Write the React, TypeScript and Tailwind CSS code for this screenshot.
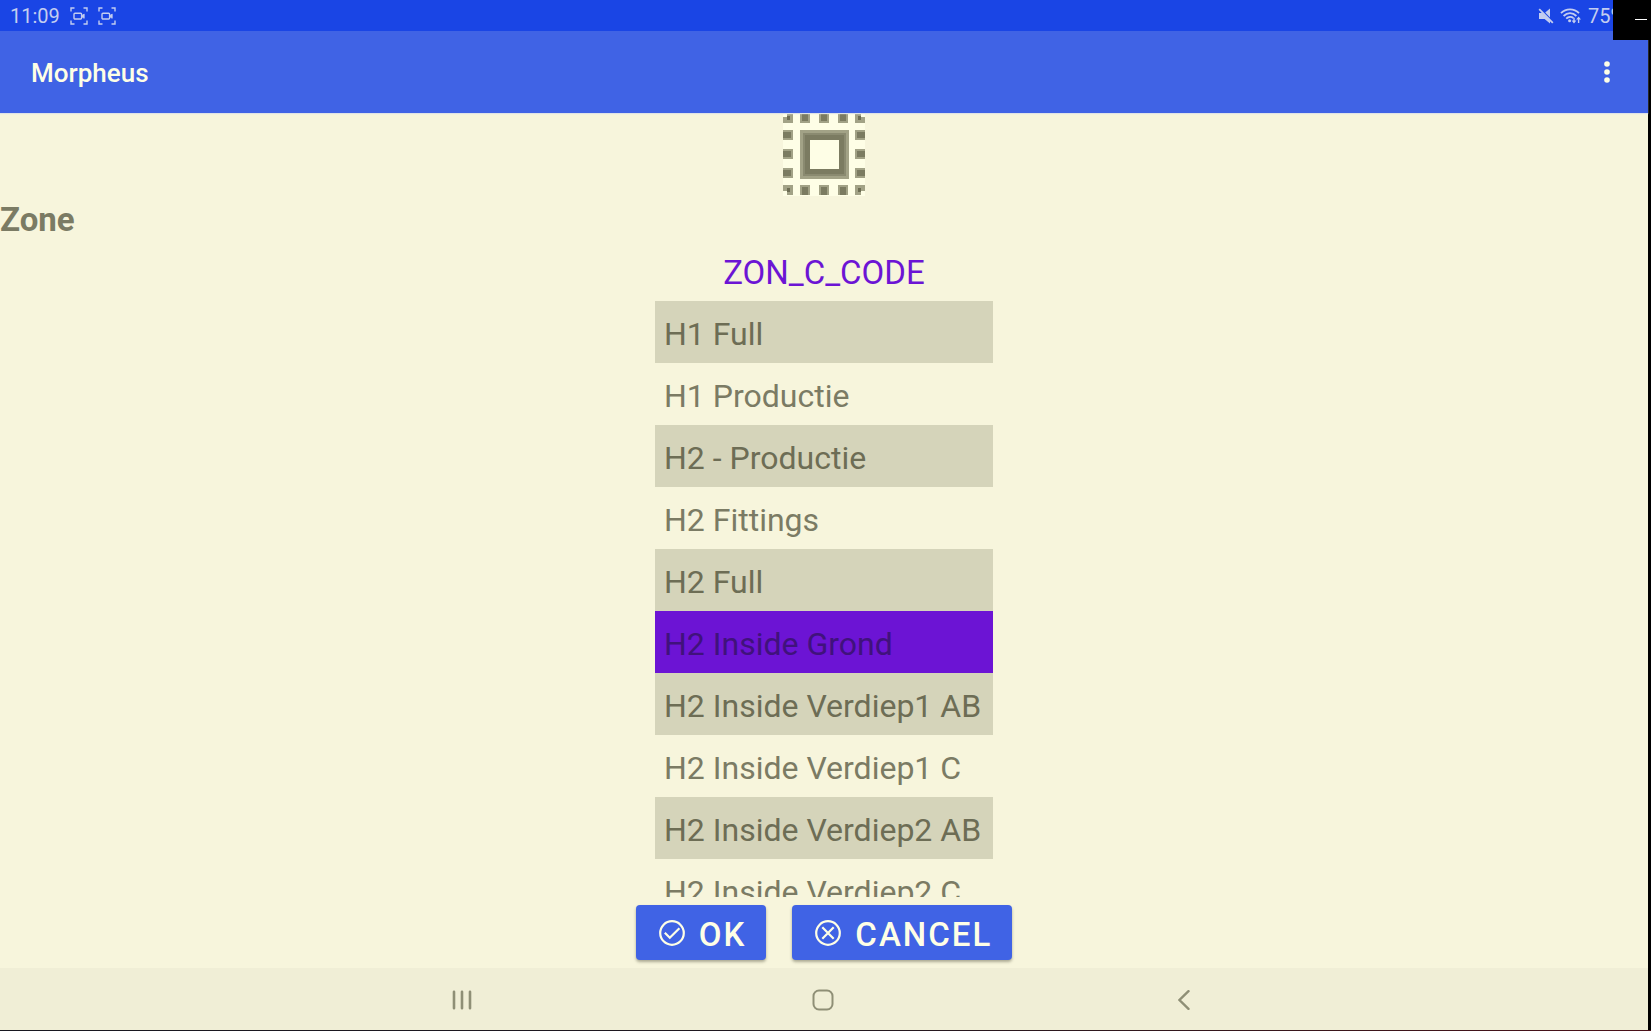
import React from "react";

const zones = [
  "H1 Full",
  "H1 Productie",
  "H2 - Productie",
  "H2 Fittings",
  "H2 Full",
  "H2 Inside Grond",
  "H2 Inside Verdiep1 AB",
  "H2 Inside Verdiep1 C",
  "H2 Inside Verdiep2 AB",
  "H2 Inside Verdiep2 C",
];

const selectedZone = "H2 Inside Grond";

function CaptureIcon() {
  return (
    <svg className="h-[18px] w-[18px]" viewBox="0 0 18 18" fill="none" stroke="currentColor" strokeWidth="1.4" aria-hidden="true">
      <path d="M1 4.5V1h3.5M13.5 1H17v3.5M17 13.5V17h-3.5M4.5 17H1v-3.5" />
      <rect x="4" y="6.2" width="7.6" height="5.8" rx="1" />
      <path d="M11.6 8.8l2.6-1.7v4.2l-2.6-1.7z" fill="currentColor" strokeWidth="0.8" />
    </svg>
  );
}

function MutedIcon() {
  return (
    <svg className="h-4 w-4" viewBox="0 0 16 16" fill="currentColor" aria-hidden="true">
      <path d="M1 5h3.4l7.6 7.6v2.9L6.6 11H1z" />
      <path d="M12 0.6v8.8L7.2 4.6z" />
      <path d="M1.2 1.2L14.8 14.8" stroke="currentColor" strokeWidth="1.8" />
    </svg>
  );
}

function WifiIcon() {
  return (
    <svg className="h-4 w-[22px]" viewBox="0 0 22 16" fill="none" stroke="currentColor" strokeWidth="1.8" aria-hidden="true">
      <path d="M1 5.2C6 0 14 0 19 5.2M3.6 8C7.4 4.2 12.6 4.2 16.4 8M6.2 10.7c2.2-2.2 5.4-2.2 7.2-.6" />
      <circle cx="9.6" cy="12.8" r="1.5" fill="currentColor" stroke="none" />
      <path d="M14 9.8V14M18.6 15V10" strokeWidth="1.4" />
      <path d="M11.6 12.6h4.8L14 15.6zM16.2 11.4H21L18.6 8.4z" fill="currentColor" stroke="none" />
    </svg>
  );
}

const dots: { x: number; y: number }[] = [];
const dotStops = [0, 17, 36, 55, 72];
dotStops.forEach((y, row) =>
  dotStops.forEach((x, col) => {
    const edge = row === 0 || row === 4 || col === 0 || col === 4;
    const corner = (row === 0 || row === 4) && (col === 0 || col === 4);
    if (edge && !corner) dots.push({ x, y });
  }),
);

function SelectAllIcon() {
  return (
    <svg className="h-[83px] w-[82px]" viewBox="0 0 82 83" aria-hidden="true">
      <rect width="82" height="83" fill="#fefee6" />
      {dots.map((d) => (
        <g key={`${d.x}-${d.y}`}>
          <rect x={d.x} y={d.y} width="10" height="10" fill="#a2a286" />
          <rect x={d.x + (d.x === 0 ? 0 : 2)} y={d.y + (d.y === 0 ? 0 : 2)} width={d.x === 0 || d.x === 72 ? 8 : 6} height={d.y === 0 || d.y === 72 ? 8 : 6} fill="#7b7b61" />
        </g>
      ))}
      <path d="M0 4h4V0h6v10H0zM82 4h-4V0h-6v10h10zM0 78h4v4h6V72H0zM82 78h-4v4h-6V72h10z" fill="#a2a286" />
      <path d="M4 3h3v4H4zM75 3h3v4h-3zM4 75h3v4H4zM75 75h3v4h-3z" fill="#6d6d53" />
      <rect x="17" y="17" width="49" height="49" fill="#a2a286" />
      <rect x="20" y="20" width="43" height="43" fill="#8a8a70" />
      <rect x="22" y="22" width="39" height="39" fill="#7b7b61" />
      <rect x="27" y="27" width="29" height="29" fill="#fefee6" />
    </svg>
  );
}

function StatusBar() {
  return (
    <div className="flex h-[31px] shrink-0 items-center justify-between bg-[#1a45e5] pl-2.5 text-xl text-[#c3cdf0]">
      <div className="flex items-center">
        <span className="leading-8">11:09</span>
        <span className="ml-2.5 flex gap-2.5">
          <CaptureIcon />
          <CaptureIcon />
        </span>
      </div>
      <div className="flex items-center gap-1.5">
        <MutedIcon />
        <WifiIcon />
        <span className="w-[60px] leading-8">75%</span>
      </div>
    </div>
  );
}

function AppBar() {
  return (
    <header className="relative z-10 flex h-[82px] shrink-0 items-center justify-between bg-[#4063e5] pl-[31px] pr-[29px] text-[#fefee6] shadow-[0_1px_1px_#dfe3e6]">
      <h1 className="pt-0.5 text-[26px] font-medium">Morpheus</h1>
      <button type="button" aria-label="More options" className="flex h-10 w-6 items-center justify-center">
        <svg className="h-[22px] w-[6px]" viewBox="0 0 6 22" fill="currentColor" aria-hidden="true">
          <circle cx="3" cy="3" r="2.8" />
          <circle cx="3" cy="11" r="2.8" />
          <circle cx="3" cy="19" r="2.8" />
        </svg>
      </button>
    </header>
  );
}

function ZoneTable() {
  return (
    <table className="mx-auto w-[338px] border-collapse text-[32px] leading-[58px] text-[#7b7b64]">
      <thead>
        <tr>
          <th scope="col" className="px-0 pb-0 pt-1.5 text-center text-[33px] font-normal leading-[56px] text-[#6c14d4]">
            ZON_C_CODE
          </th>
        </tr>
      </thead>
      <tbody>
        {zones.map((zone) => (
          <tr
            key={zone}
            aria-selected={zone === selectedZone}
            className={
              zone === selectedZone
                ? "bg-[#6c14d4] text-[#40127c]"
                : "odd:bg-[#d5d4ba] odd:text-[#6d6d55]"
            }
          >
            <td className="whitespace-nowrap pb-0 pl-[9px] pr-0 pt-1">{zone}</td>
          </tr>
        ))}
      </tbody>
    </table>
  );
}

const actionClass =
  "flex h-[55px] items-center gap-3.5 rounded bg-[#4063e5] pl-[23px] pr-5 text-[33px] font-medium tracking-[2px] text-[#fefee6] shadow-[0_2px_3px_rgba(60,60,40,0.4)]";

function Actions() {
  return (
    <div className="flex shrink-0 justify-center gap-[26px] pb-2 pt-2">
      <button type="button" className={actionClass}>
        <svg className="h-[26px] w-[26px]" viewBox="0 0 26 26" fill="none" stroke="currentColor" strokeWidth="2.2" aria-hidden="true">
          <circle cx="13" cy="13" r="11.8" />
          <path d="M5.8 12.8l5 5 9.6-9.6" />
        </svg>
        <span className="pt-1">OK</span>
      </button>
      <button type="button" className={actionClass}>
        <svg className="h-[26px] w-[26px]" viewBox="0 0 26 26" fill="none" stroke="currentColor" strokeWidth="2.2" aria-hidden="true">
          <circle cx="13" cy="13" r="11.8" />
          <path d="M7.3 7.3l11.4 11.4M18.7 7.3L7.3 18.7" />
        </svg>
        <span className="pt-1">CANCEL</span>
      </button>
    </div>
  );
}

function NavigationBar() {
  return (
    <nav className="flex h-[62px] shrink-0 items-center justify-center gap-[317px] bg-[#f0eed6] pr-0.5 pt-0.5 text-[#8f8f76]">
      <button type="button" aria-label="Recent apps" className="flex w-11 justify-center">
        <svg className="h-5 w-5" viewBox="0 0 20 20" fill="none" stroke="currentColor" strokeWidth="2.6" strokeLinecap="round" aria-hidden="true">
          <path d="M2 1.8v16.4M10 1.8v16.4M18 1.8v16.4" />
        </svg>
      </button>
      <button type="button" aria-label="Home" className="flex w-11 justify-center">
        <svg className="h-[22px] w-[22px]" viewBox="0 0 22 22" fill="none" stroke="currentColor" strokeWidth="2" aria-hidden="true">
          <rect x="1.5" y="1.5" width="19" height="19" rx="5.5" />
        </svg>
      </button>
      <button type="button" aria-label="Back" className="flex w-11 justify-center">
        <svg className="h-5 w-3" viewBox="0 0 12 20" fill="none" stroke="currentColor" strokeWidth="2.4" strokeLinecap="round" aria-hidden="true">
          <path d="M10.5 1.2L1.5 10l9 8.8" />
        </svg>
      </button>
    </nav>
  );
}

export default function App() {
  return (
    <div className="relative h-screen bg-black pb-px pr-[3px] font-['Roboto',sans-serif]">
      <div className="flex h-full flex-col bg-[#f7f5dc]">
        <StatusBar />
        <AppBar />
        <main className="flex min-h-0 flex-1 flex-col">
          <div className="min-h-0 flex-1 overflow-hidden">
            <div className="flex justify-center">
              <SelectAllIcon />
            </div>
            <h2 className="h-[43px] text-[33px] font-bold leading-[48px] text-[#7b7b64]">Zone</h2>
            <ZoneTable />
          </div>
          <Actions />
        </main>
        <NavigationBar />
      </div>
      <button type="button" aria-label="Minimize" className="absolute right-0 top-0 z-20 flex h-10 w-[38px] justify-end bg-black pr-1 pt-[19px]">
        <span className="h-px w-3 bg-white" />
      </button>
      <div className="absolute bottom-0 left-0 h-px w-full bg-linear-to-r from-[#171720] via-[#201820] to-[#4a1018]" />
    </div>
  );
}
